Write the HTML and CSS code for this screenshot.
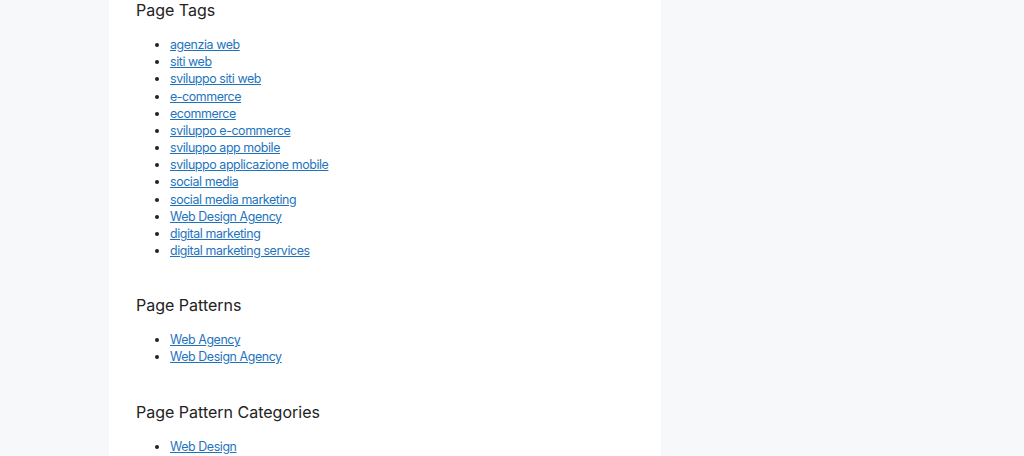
FILE: index.html
```html
<!DOCTYPE html>
<html lang="it">
<head>
<meta charset="utf-8">
<title>Page Tags</title>
<link rel="stylesheet" href="styles.css">
</head>
<body>
<div class="site">
  <main class="content">
    <section class="block">
      <h2 class="title">Page Tags</h2>
      <ul class="links">
        <li><a href="#">agenzia web</a></li>
        <li><a href="#">siti web</a></li>
        <li><a href="#">sviluppo siti web</a></li>
        <li><a href="#">e-commerce</a></li>
        <li><a href="#">ecommerce</a></li>
        <li><a href="#">sviluppo e-commerce</a></li>
        <li><a href="#">sviluppo app mobile</a></li>
        <li><a href="#">sviluppo applicazione mobile</a></li>
        <li><a href="#">social media</a></li>
        <li><a href="#">social media marketing</a></li>
        <li><a href="#">Web Design Agency</a></li>
        <li><a href="#">digital marketing</a></li>
        <li><a href="#">digital marketing services</a></li>
      </ul>
    </section>
    <section class="block">
      <h2 class="title">Page Patterns</h2>
      <ul class="links">
        <li><a href="#">Web Agency</a></li>
        <li><a href="#">Web Design Agency</a></li>
      </ul>
    </section>
    <section class="block last">
      <h2 class="title">Page Pattern Categories</h2>
      <ul class="links">
        <li><a href="#">Web Design</a></li>
      </ul>
    </section>
  </main>
</div>
</body>
</html>
```
FILE: styles.css
```css
html, body {
  margin: 0;
  padding: 0;
}
body {
  background: #f7f8f9;
  font-family: Inter, "Liberation Sans", sans-serif;
  color: #222222;
  height: 456px;
  overflow: hidden;
}
.site {
  display: flex;
  padding-left: 109px;
}
.content {
  width: 552px;
  background: #ffffff;
  padding: 0 27px;
  box-sizing: border-box;
  height: 466px;
  margin-top: -10px;
  overflow: hidden;
}
.block {
  padding-bottom: 26px;
}
.block.last {
  padding-bottom: 0;
}
.title {
  font-size: 16px;
  font-weight: 400;
  line-height: 22px;
  margin: 0 0 15px;
  padding-top: 9px;
}
.links {
  margin: 0;
  padding-left: 34px;
  font-size: 12.4px;
  letter-spacing: -0.4px;
  line-height: 17.17px;
}
.links a {
  color: #1e73be;
  text-decoration: underline;
}
```
